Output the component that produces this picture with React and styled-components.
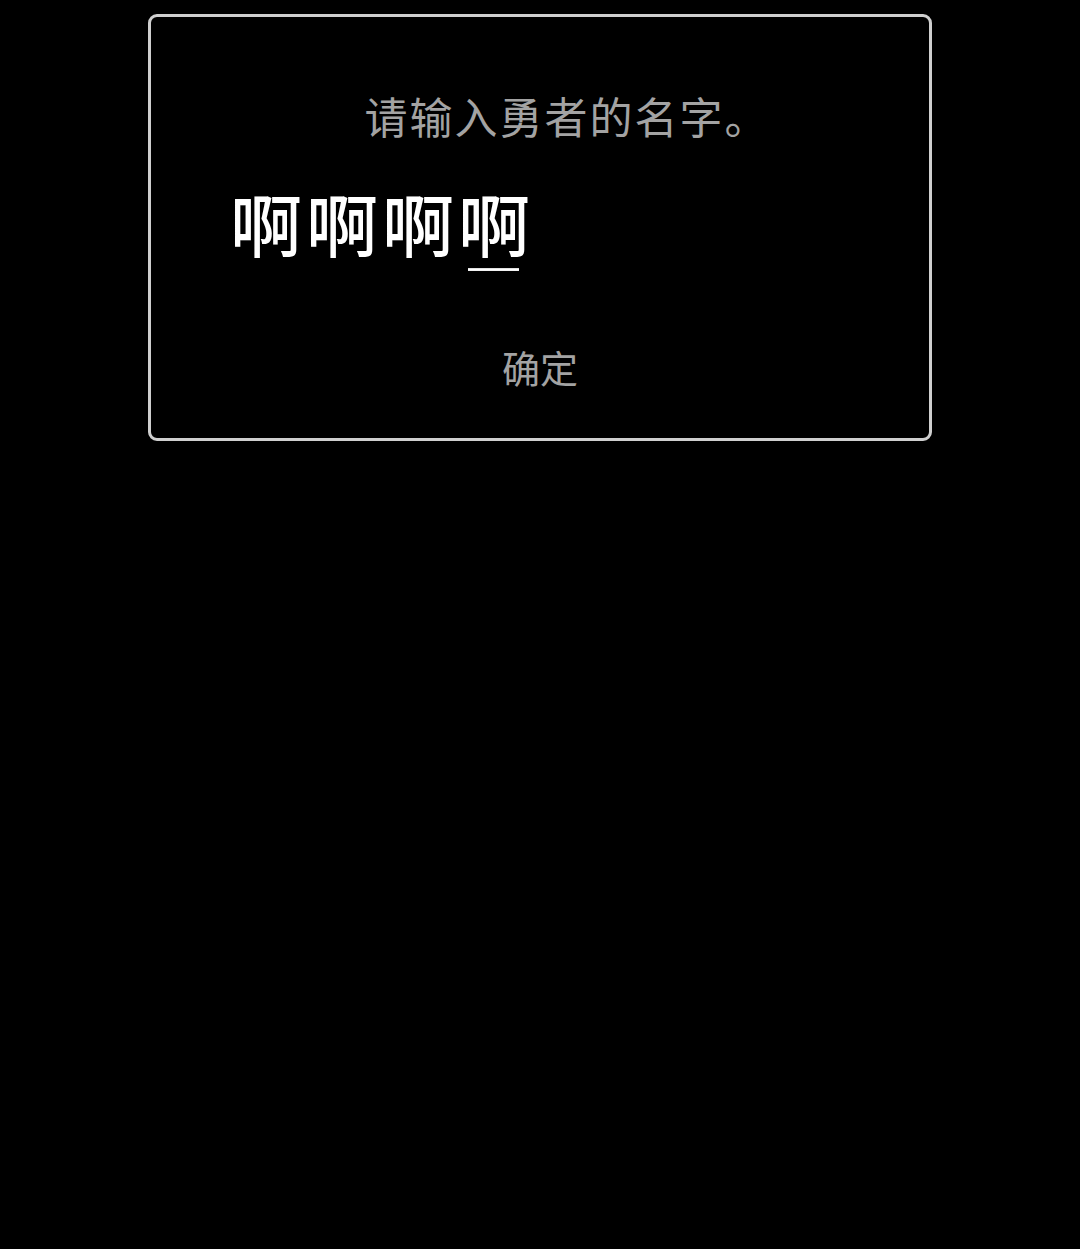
import React from 'react'
import styled, { createGlobalStyle } from 'styled-components'

const Global = createGlobalStyle`
  html, body {
    margin: 0;
    padding: 0;
    background: #000;
  }
  body {
    font-family: "Noto Sans CJK SC", "Noto Sans", sans-serif;
  }
`

const Page = styled.div`
  min-height: 1249px;
  background: #000;
  padding-top: 14px;
  box-sizing: border-box;
`

const Dialog = styled.div`
  margin-left: 148px;
  width: 784px;
  height: 427px;
  box-sizing: border-box;
  border: 3px solid #cfcfcf;
  border-radius: 9px;
  display: flex;
  flex-direction: column;
`

const Title = styled.div`
  margin-top: 70px;
  padding-left: 54px;
  text-align: center;
  color: #a3a3a3;
  font-size: 43px;
  line-height: 56px;
  letter-spacing: 2px;
`

const NameInput = styled.div`
  margin-top: 40px;
  padding-left: 79px;
  color: #fff;
  font-size: 72px;
  line-height: 80px;
  font-weight: 500;
  letter-spacing: 4px;
  transform: scaleY(0.94);
`

const Composing = styled.span`
  position: relative;
  &::after {
    content: '';
    position: absolute;
    left: 10px;
    width: 51px;
    bottom: 1px;
    height: 3px;
    background: #fff;
  }
`

const Confirm = styled.div`
  margin-top: 79px;
  text-align: center;
  color: #a3a3a3;
  font-size: 38px;
  line-height: 50px;
`

export default function App() {
  return (
    <>
      <Global />
      <Page>
        <Dialog>
          <Title>请输入勇者的名字。</Title>
          <NameInput>
            啊啊啊<Composing>啊</Composing>
          </NameInput>
          <Confirm>确定</Confirm>
        </Dialog>
      </Page>
    </>
  )
}
